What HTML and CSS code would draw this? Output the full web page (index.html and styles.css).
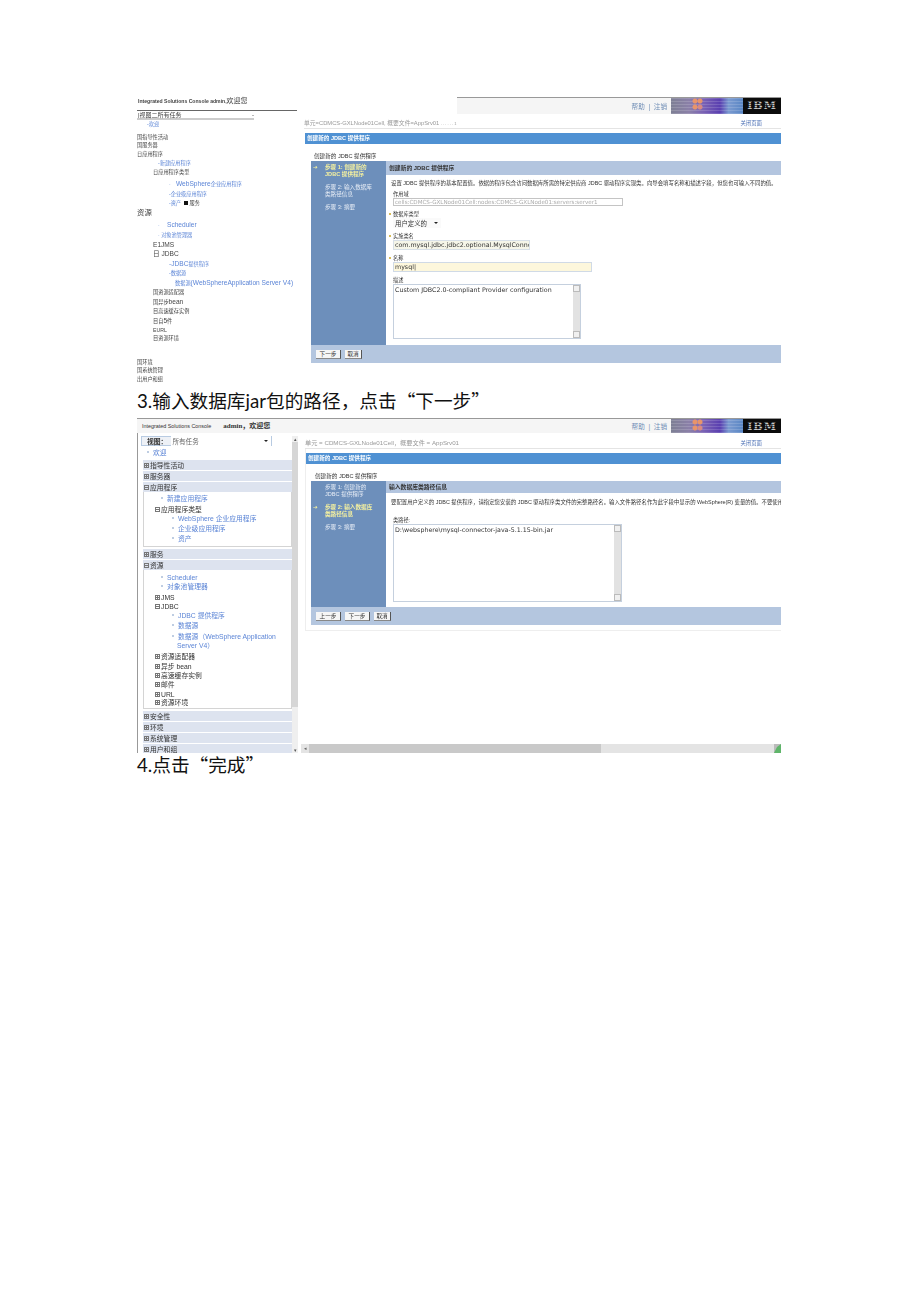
FILE: index.html
```html
<!DOCTYPE html>
<html lang="zh-CN">
<head>
    <meta charset="UTF-8">
    <meta name="viewport" content="width=device-width, initial-scale=1.0">
    <title>创建新的 JDBC 提供程序</title>
    <link rel="stylesheet" href="styles.css">
</head>
<body>
<div class="page">

    <!-- first picture: tree has lost its styling -->
    <div class="shot shot-first">
        <div class="flat-tree">
            <div class="flat-title">Integrated Solutions Console admin,<span class="big">欢迎您</span></div>
            <div class="flat-view">|视图二所有任务<span class="flat-arrow">-</span></div>
            <div class="row l1 link g1">-欢迎</div>
            <div class="row g5">国指导性活动</div>
            <div class="row">国服务器</div>
            <div class="row g1">日应用程序</div>
            <div class="row l3 link g1">-新建应用程序</div>
            <div class="row l2 g1">日应用程序类型</div>
            <div class="row l4 link g4"><span class="lead-short">·</span><span class="wide">WebSphere</span>企业应用程序</div>
            <div class="row l4 link g2">-企业级应用程序</div>
            <div class="row l4 g1"><span class="link">-资产</span> &nbsp;<span class="square"></span> 服务</div>
            <div class="row big g2">资源</div>
            <div class="row l3 link g4"><span class="lead">·</span><span class="wide">Scheduler</span></div>
            <div class="row l3 link g2">· 对象池管理器</div>
            <div class="row l2 wide g2">E1JMS</div>
            <div class="row l2 wide g1">日 JDBC</div>
            <div class="row l4 link g2"><span class="wide">-JDBC</span>提供程序</div>
            <div class="row l4 link g1">-数据源</div>
            <div class="row l5 link g2">数据源<span class="wide">(WebSphereApplication Server V4)</span></div>
            <div class="row l2 g1">国资源适配器</div>
            <div class="row l2 g2">国异步<span class="wide">bean</span></div>
            <div class="row l2 g1">目高速缓存实例</div>
            <div class="row l2 g2">目自<span class="wide">5</span>件</div>
            <div class="row l2 g1">EURL</div>
            <div class="row l2">目资源环境</div>
            <div class="row g16">国环境</div>
            <div class="row">国系统管理</div>
            <div class="row g1">出用户和组</div>
        </div>
        <div class="console">
            <div class="top-links top-links-short">
                <span class="help">帮助 &nbsp;|&nbsp; 注销</span>
                <div class="banner"></div>
                <div class="ibm">IBM</div>
            </div>
            <div class="crumbs">
                <span>单元=CDMCS-GXLNode01Cell, 概要文件=AppSrv01 <small class="crumb-tail">. . . . . . 1</small></span>
                <a class="close-page">关闭页面</a>
            </div>
            <div class="title-bar">创建新的 JDBC 提供程序</div>
            <div class="form-title">创建新的 JDBC 提供程序</div>
            <div class="wizard wizard-first">
                <div class="wizard-body">
                    <div class="steps">
                        <div class="step current"><span class="step-arrow">➔</span>步骤 1: 创建新的<br>JDBC 提供程序</div>
                        <div class="step">步骤 2: 输入数据库<br>类路径信息</div>
                        <div class="step">步骤 3: 摘要</div>
                    </div>
                    <div class="step-main">
                        <div class="step-head">创建新的 JDBC 提供程序</div>
                        <div class="fields">
                            <div class="desc">设置 JDBC 提供程序的基本配置值。依据的程序包含访问数据库所需的特定供应商 JDBC 驱动程序实现类。向导会填写名称和描述字段，但您也可输入不同的值。</div>
                            <div class="label">作用域</div>
                            <div class="field field-scope">cells:CDMCS-GXLNode01Cell:nodes:CDMCS-GXLNode01:servers:server1</div>
                            <div class="label required">数据库类型</div>
                            <div class="select">用户定义的<span class="select-arrow"></span></div>
                            <div class="label required">实施类名</div>
                            <div class="field field-class">com.mysql.jdbc.jdbc2.optional.MysqlConnc</div>
                            <div class="label required">名称</div>
                            <div class="field field-name">mysql|</div>
                            <div class="label">描述</div>
                            <div class="area area-first">
                                <div class="area-text">Custom JDBC2.0-compliant Provider configuration</div>
                                <div class="area-scroll"><span></span><span></span></div>
                            </div>
                        </div>
                    </div>
                </div>
                <div class="wizard-foot">
                    <button class="btn btn-main">下一步</button>
                    <button class="btn">取消</button>
                </div>
            </div>
        </div>
    </div>

    <p class="doc-line doc-three">3.输入数据库jar包的路径，点击<span class="cjk">“</span>下一步<span class="cjk">”</span></p>

    <!-- second picture: full console -->
    <div class="shot shot-second">
        <div class="head-row">
            <div class="brand">Integrated Solutions Console<b>admin，欢迎您</b></div>
            <div class="top-links">
                <span class="help">帮助 &nbsp;|&nbsp; 注销</span>
                <div class="banner"></div>
                <div class="ibm">IBM</div>
            </div>
        </div>
        <div class="console-row">
            <div class="nav">
                <div class="nav-list">
                    <div class="view-box"><b>视图：</b><span class="view-select">所有任务<span class="select-arrow"></span></span></div>
                    <div class="welcome"><span class="dot"></span><span class="link">欢迎</span></div>
                    <div class="bar bar-first"><span class="plus"></span>指导性活动</div>
                    <div class="bar"><span class="plus"></span>服务器</div>
                    <div class="bar"><span class="plus minus"></span>应用程序</div>
                    <div class="group">
                        <div class="item n1 link"><span class="dot"></span>新建应用程序</div>
                        <div class="item n0 g3"><span class="plus minus"></span>应用程序类型</div>
                        <div class="item n2 link g1"><span class="dot"></span>WebSphere 企业应用程序</div>
                        <div class="item n2 link g2"><span class="dot"></span>企业级应用程序</div>
                        <div class="item n2 link g2"><span class="dot"></span>资产</div>
                    </div>
                    <div class="bar bar-gap"><span class="plus"></span>服务</div>
                    <div class="bar"><span class="plus minus"></span>资源</div>
                    <div class="group group-res">
                        <div class="item n1 link"><span class="dot"></span>Scheduler</div>
                        <div class="item n1 link g1"><span class="dot"></span>对象池管理器</div>
                        <div class="item n0 g3"><span class="plus"></span>JMS</div>
                        <div class="item n0 g1"><span class="plus minus"></span>JDBC</div>
                        <div class="item n2 link g1"><span class="dot"></span>JDBC 提供程序</div>
                        <div class="item n2 link g2"><span class="dot"></span>数据源</div>
                        <div class="item n2 link g3"><span class="dot"></span>数据源（WebSphere Application</div>
                        <div class="item n3 link g1">Server V4）</div>
                        <div class="item n0 g3"><span class="plus"></span>资源适配器</div>
                        <div class="item n0 g2"><span class="plus"></span>异步 bean</div>
                        <div class="item n0 g1"><span class="plus"></span>高速缓存实例</div>
                        <div class="item n0 g1"><span class="plus"></span>邮件</div>
                        <div class="item n0 g2"><span class="plus"></span>URL</div>
                        <div class="item n0"><span class="plus"></span>资源环境</div>
                    </div>
                    <div class="bar bar-gap"><span class="plus"></span>安全性</div>
                    <div class="bar"><span class="plus"></span>环境</div>
                    <div class="bar"><span class="plus"></span>系统管理</div>
                    <div class="bar"><span class="plus"></span>用户和组</div>
                </div>
                <div class="nav-scroll"><span>▴</span><i></i><span>▾</span></div>
            </div>
            <div class="content">
                <div class="crumbs">
                    <span>单元 = CDMCS-GXLNode01Cell，概要文件 = AppSrv01</span>
                    <a class="close-page">关闭页面</a>
                </div>
                <div class="panel">
                    <div class="title-bar">创建新的 JDBC 提供程序</div>
                    <div class="form-title">创建新的 JDBC 提供程序</div>
                    <div class="wizard wizard-second">
                        <div class="wizard-body">
                            <div class="steps">
                                <div class="step">步骤 1: 创建新的<br>JDBC 提供程序</div>
                                <div class="step current"><span class="step-arrow">➔</span>步骤 2: 输入数据库<br>类路径信息</div>
                                <div class="step">步骤 3: 摘要</div>
                            </div>
                            <div class="step-main">
                                <div class="step-head step-head-low">输入数据库类路径信息</div>
                                <div class="fields fields-second">
                                    <div class="desc">要配置用户定义的 JDBC 提供程序，请指定您安装的 JDBC 驱动程序类文件的完整路径名。输入文件路径名作为此字段中显示的 WebSphere(R) 变量的值。不要使用</div>
                                    <div class="label label-far">类路径:</div>
                                    <div class="area area-second">
                                        <div class="area-text">D:\websphere\mysql-connector-java-5.1.15-bin.jar</div>
                                        <div class="area-scroll"><span></span><span></span></div>
                                    </div>
                                </div>
                            </div>
                        </div>
                        <div class="wizard-foot">
                            <button class="btn btn-main">上一步</button>
                            <button class="btn btn-main">下一步</button>
                            <button class="btn">取消</button>
                        </div>
                    </div>
                </div>
                <div class="hscroll">
                    <span class="hscroll-btn">◂</span>
                    <i class="hscroll-thumb"></i>
                    <span class="hscroll-end">
                        <svg width="7" height="9" viewBox="0 0 7 9"><path d="M0 9 L3 3 L7 0 L7 9 Z" fill="#5fb56a"/></svg>
                    </span>
                </div>
            </div>
        </div>
    </div>

    <p class="doc-line doc-four">4.点击<span class="cjk">“</span>完成<span class="cjk">”</span></p>
</div>
</body>
</html>
```

FILE: styles.css
```css
body {
    margin: 0;
    padding: 0;
    background-color: #fff;
    color: #333;
    font-family: "Liberation Sans", "Noto Sans CJK SC", sans-serif;
}

.page {
    width: 644px;
    margin-left: 137px;
    padding-top: 97px;
}

.shot {
    display: flex;
    filter: blur(0.4px);
}

.shot-first {
    height: 266px;
}

.shot-second {
    flex-direction: column;
    height: 335px;
    border-top: 1px solid #999;
    box-sizing: border-box;
    overflow: hidden;
}

.doc-line {
    margin: 0;
    color: #111;
    font-family: "Lato", "Noto Sans CJK SC", sans-serif;
    font-size: 18.67px;
    white-space: nowrap;
}

.cjk {
    font-family: "Noto Sans CJK SC", sans-serif;
}

.doc-three {
    height: 26px;
    margin-top: 24px;
    margin-bottom: 5px;
    line-height: 26px;
}

.doc-four {
    height: 22px;
    line-height: 22px;
}

/* flat tree */
.flat-tree {
    width: 160px;
    flex-shrink: 0;
    font-size: 5.2px;
    color: #444;
}

.flat-title {
    height: 13px;
    padding-left: 1px;
    border-bottom: 1px solid #666;
    font-size: 5.1px;
    font-weight: bold;
    line-height: 8px;
    white-space: nowrap;
}

.flat-title .big {
    font-size: 7px;
    font-weight: normal;
}

.flat-view {
    display: flex;
    justify-content: space-between;
    width: 116px;
    height: 7px;
    padding-left: 1px;
    border-bottom: 2px solid #ccc;
    font-size: 6px;
    line-height: 8px;
}

.row {
    height: 8px;
    line-height: 8px;
    white-space: nowrap;
}

.flat-view + .row {
    margin-top: 0;
}

.big {
    font-size: 7.4px;
}

.wide {
    font-size: 6.6px;
}

.link {
    color: #5c85d6;
}

.lead {
    display: inline-block;
    width: 9px;
}

.lead-short {
    display: inline-block;
    width: 7px;
}

.l1 { padding-left: 10px; }
.l2 { padding-left: 16px; }
.l3 { padding-left: 21px; }
.l4 { padding-left: 32px; }
.l5 { padding-left: 38px; }

.g1 { margin-top: 1px; }
.g2 { margin-top: 2px; }
.g3 { margin-top: 3px; }
.g4 { margin-top: 4px; }
.g5 { margin-top: 5px; }
.g16 { margin-top: 16px; }

.square {
    display: inline-block;
    width: 4px;
    height: 4px;
    background-color: #111;
}

/* console */
.console {
    flex: 1;
    min-width: 0;
}

.top-links {
    display: flex;
    justify-content: flex-end;
    align-items: center;
    flex: 1;
    height: 14px;
    background-color: #f5f5f5;
}

.top-links-short {
    height: 16px;
    margin-left: 160px;
    border-top: 1px solid #999;
}

.help {
    margin-right: 4px;
    color: #6f8db5;
    font-size: 6.6px;
}

.banner {
    width: 72px;
    height: 100%;
    background:
        radial-gradient(circle at 24px 3px, #e8946a 0, #e8946a 2px, transparent 3px),
        radial-gradient(circle at 29px 3px, #e8946a 0, #e8946a 2px, transparent 3px),
        radial-gradient(circle at 24px 9px, #e8946a 0, #e8946a 2px, transparent 3px),
        radial-gradient(circle at 29px 9px, #d98a82 0, #d98a82 2px, transparent 3px),
        repeating-linear-gradient(0deg, rgba(255, 255, 255, 0.15) 0, rgba(255, 255, 255, 0.15) 1px, transparent 1px, transparent 3px),
        linear-gradient(90deg, #7d7f94 0, #8b80a8 25%, #7a62b4 45%, #5a3fb0 68%, #7a9ad0 80%, #5a86c4 100%);
}

.ibm {
    position: relative;
    width: 38px;
    height: 100%;
    background-color: #0c0c0c;
    color: #c8c8c8;
    font-family: "DejaVu Serif", "Liberation Serif", serif;
    font-size: 11px;
    font-weight: bold;
    letter-spacing: 1px;
    line-height: 15px;
    text-align: center;
}

.ibm::after {
    content: "";
    position: absolute;
    inset: 0;
    background: repeating-linear-gradient(0deg, rgba(12, 12, 12, 0.6) 0, rgba(12, 12, 12, 0.6) 1px, transparent 1px, transparent 2px);
}

.crumbs {
    display: flex;
    justify-content: space-between;
    height: 10px;
    margin: 4px 0 0 7px;
    padding-right: 19px;
    border-bottom: 1px solid #e4e4e4;
    color: #999;
    font-size: 5.8px;
    line-height: 10px;
}

.crumb-tail {
    font-size: 4px;
}

.close-page {
    color: #4a6fb5;
    font-size: 5.4px;
}

.title-bar {
    height: 11px;
    margin: 4px 0 0 8px;
    padding-left: 2px;
    background-color: #4f91d3;
    color: #fff;
    font-size: 5.6px;
    font-weight: bold;
    line-height: 11px;
}

.form-title {
    height: 17px;
    padding-left: 17px;
    font-size: 5.6px;
    line-height: 24px;
}

.wizard {
    display: flex;
    flex-direction: column;
    margin-left: 14px;
}

.wizard-first {
    height: 202px;
}

.wizard-second {
    height: 144px;
}

.wizard-body {
    display: flex;
    flex: 1;
    min-height: 0;
}

.steps {
    width: 75px;
    flex-shrink: 0;
    padding: 3px 4px 0 14px;
    box-sizing: border-box;
    background-color: #6d8fbb;
    color: #e6ecf5;
    font-size: 5.6px;
    line-height: 7px;
}

.step {
    position: relative;
    margin-bottom: 6px;
    white-space: nowrap;
}

.step.current {
    color: #f4f0a0;
    font-weight: bold;
}

.step-arrow {
    position: absolute;
    left: -12px;
    color: #f4f0a0;
    font-family: "DejaVu Sans", sans-serif;
}

.step-main {
    flex: 1;
    min-width: 0;
}

.step-head {
    height: 14px;
    padding-left: 3px;
    background-color: #b3c5df;
    font-size: 5.8px;
    font-weight: bold;
    line-height: 14px;
}

.step-head-low {
    height: 12px;
    line-height: 12px;
}

.fields {
    padding: 4px 0 0 7px;
    overflow: hidden;
}

.fields-second {
    padding-top: 5px;
}

.desc {
    height: 8px;
    margin-left: -2px;
    font-size: 5.42px;
    line-height: 8px;
    white-space: nowrap;
}

.label {
    height: 8px;
    margin-top: 4px;
    font-size: 5.2px;
    line-height: 8px;
}

.desc + .label {
    margin-top: 3px;
}

.desc + .label-far {
    margin-top: 10px;
}

.required::before {
    content: "";
    display: inline-block;
    width: 2px;
    height: 2px;
    margin: 0 2px 1px -4px;
    border-radius: 50%;
    background-color: #c9a520;
}

.field,
.area-text {
    font-family: "DejaVu Sans", sans-serif;
    font-size: 6.3px;
    white-space: nowrap;
}

.field {
    height: 8px;
    padding-left: 1px;
    box-sizing: border-box;
    border: 1px solid #c4c4c4;
    line-height: 6px;
    overflow: hidden;
}

.field-scope {
    width: 230px;
    color: #aaa;
    font-size: 5.6px;
}

.field-class {
    width: 137px;
    height: 10px;
    border-color: #d8e0e8;
    background-color: #f5f5e8;
    line-height: 8px;
}

.field-name {
    width: 199px;
    height: 10px;
    border-color: #d0dae6;
    background-color: #fdf7dc;
    line-height: 8px;
}

.select {
    display: flex;
    align-items: center;
    justify-content: space-between;
    width: 48px;
    height: 10px;
    padding: 0 3px 0 2px;
    box-sizing: border-box;
    background-color: #fafafa;
    font-size: 6.4px;
}

.select-arrow {
    width: 0;
    height: 0;
    border: 2px solid transparent;
    border-top: 2px solid #222;
    border-bottom: 0;
}

.area {
    display: flex;
    box-sizing: border-box;
    border: 1px solid #c5d0de;
}

.area-first {
    width: 188px;
    height: 55px;
}

.area-second {
    width: 229px;
    height: 78px;
}

.area-text {
    flex: 1;
    padding: 1px 0 0 1px;
    line-height: 7px;
    overflow: hidden;
}

.area-scroll {
    display: flex;
    flex-direction: column;
    justify-content: space-between;
    width: 7px;
    background-color: #e2e2e2;
}

.area-scroll span {
    height: 7px;
    background-color: #f0f0f0;
    border: 1px solid #bbb;
    box-sizing: border-box;
}

.wizard-foot {
    display: flex;
    gap: 4px;
    align-items: center;
    height: 18px;
    padding-left: 5px;
    background-color: #b4c6df;
    flex-shrink: 0;
}

.btn {
    height: 9px;
    width: 17px;
    padding: 0;
    border: 0;
    border-right: 1px solid #555;
    border-bottom: 1px solid #888;
    background-color: #f6f6f6;
    color: #333;
    font-family: inherit;
    font-size: 5.6px;
    line-height: 8px;
}

.btn-main {
    width: 25px;
}

/* second picture */
.head-row {
    display: flex;
    height: 14px;
    background-color: #f5f5f5;
    flex-shrink: 0;
}

.brand {
    width: 240px;
    padding-left: 5px;
    font-size: 5.4px;
    line-height: 14px;
    white-space: nowrap;
    flex-shrink: 0;
}

.brand b {
    margin-left: 12px;
    font-family: "Liberation Serif", "Noto Sans CJK SC", serif;
    font-size: 7px;
}

.console-row {
    display: flex;
    flex: 1;
    min-height: 0;
}

.nav {
    display: flex;
    width: 161px;
    flex-shrink: 0;
    box-sizing: border-box;
    border-left: 1px solid #999;
}

.nav-list {
    flex: 1;
    min-width: 0;
    padding: 3px 0 0 5px;
    overflow: hidden;
    font-size: 6.8px;
}

.view-box {
    display: flex;
    align-items: center;
    width: 131px;
    height: 10px;
    margin-left: -2px;
    padding-left: 5px;
    box-sizing: border-box;
    border: 1px solid #b8cbe2;
    background-color: #eef1f6;
    font-family: "Liberation Serif", "Noto Sans CJK SC", serif;
}

.view-select {
    display: flex;
    align-items: center;
    justify-content: space-between;
    flex: 1;
    margin-left: 4px;
    padding: 0 3px 0 1px;
    background-color: #fff;
    color: #666;
    font-family: "Liberation Sans", "Noto Sans CJK SC", sans-serif;
    font-size: 6.6px;
}

.welcome {
    display: flex;
    align-items: center;
    height: 11px;
    padding-left: 4px;
}

.bar {
    display: flex;
    align-items: center;
    height: 10px;
    margin-top: 1px;
    background-color: #dde3ef;
    white-space: nowrap;
}

.bar-first {
    margin-top: 3px;
}

.bar-gap {
    margin-top: 2px;
}

.plus {
    width: 3px;
    height: 3px;
    margin: 0 1px;
    border: 1px solid #777;
    background: linear-gradient(#777, #777) center / 100% 1px no-repeat, linear-gradient(#777, #777) center / 1px 100% no-repeat;
    flex-shrink: 0;
}

.plus.minus {
    background: linear-gradient(#777, #777) center / 100% 1px no-repeat;
}

.group {
    height: 55px;
    padding-top: 2px;
    box-sizing: border-box;
    border: 1px solid #d4d4d4;
    border-top: 0;
}

.group-res {
    height: 139px;
    padding-top: 3px;
}

.item {
    display: flex;
    align-items: center;
    height: 8px;
    white-space: nowrap;
}

.n0 { padding-left: 10px; }
.n1 { padding-left: 17px; }
.n2 { padding-left: 28px; }
.n3 { padding-left: 33px; }

.dot {
    width: 2px;
    height: 2px;
    margin-right: 4px;
    border-radius: 50%;
    background-color: #a9bcd8;
    flex-shrink: 0;
}

.nav-scroll {
    display: flex;
    flex-direction: column;
    justify-content: space-between;
    width: 6px;
    margin-top: 3px;
    background-color: #efefef;
    color: #555;
    font-size: 5px;
    line-height: 6px;
    text-align: center;
    flex-shrink: 0;
}

.nav-scroll i {
    flex: 1;
    margin-bottom: 40px;
    background-color: #d6d6d6;
}

.content {
    display: flex;
    flex-direction: column;
    flex: 1;
    min-width: 0;
}

.content .crumbs {
    margin-top: 5px;
    margin-left: 7px;
    font-size: 6.2px;
}

.panel {
    margin-left: 7px;
    padding-bottom: 5px;
    border-left: 1px solid #eee;
    border-bottom: 1px solid #eee;
}

.panel .title-bar {
    margin-left: 0;
}

.panel .form-title {
    padding-left: 9px;
}

.panel .wizard {
    margin-left: 5px;
}

.hscroll {
    display: flex;
    align-items: stretch;
    height: 9px;
    margin: auto 0 0 3px;
    background-color: #e4e4e4;
}

.hscroll-btn {
    width: 8px;
    color: #666;
    font-size: 5px;
    line-height: 9px;
    text-align: center;
}

.hscroll-thumb {
    width: 292px;
    background-color: #c9c9c9;
}

.hscroll-end {
    display: flex;
    margin-left: auto;
    background-color: #bbb;
}
```
